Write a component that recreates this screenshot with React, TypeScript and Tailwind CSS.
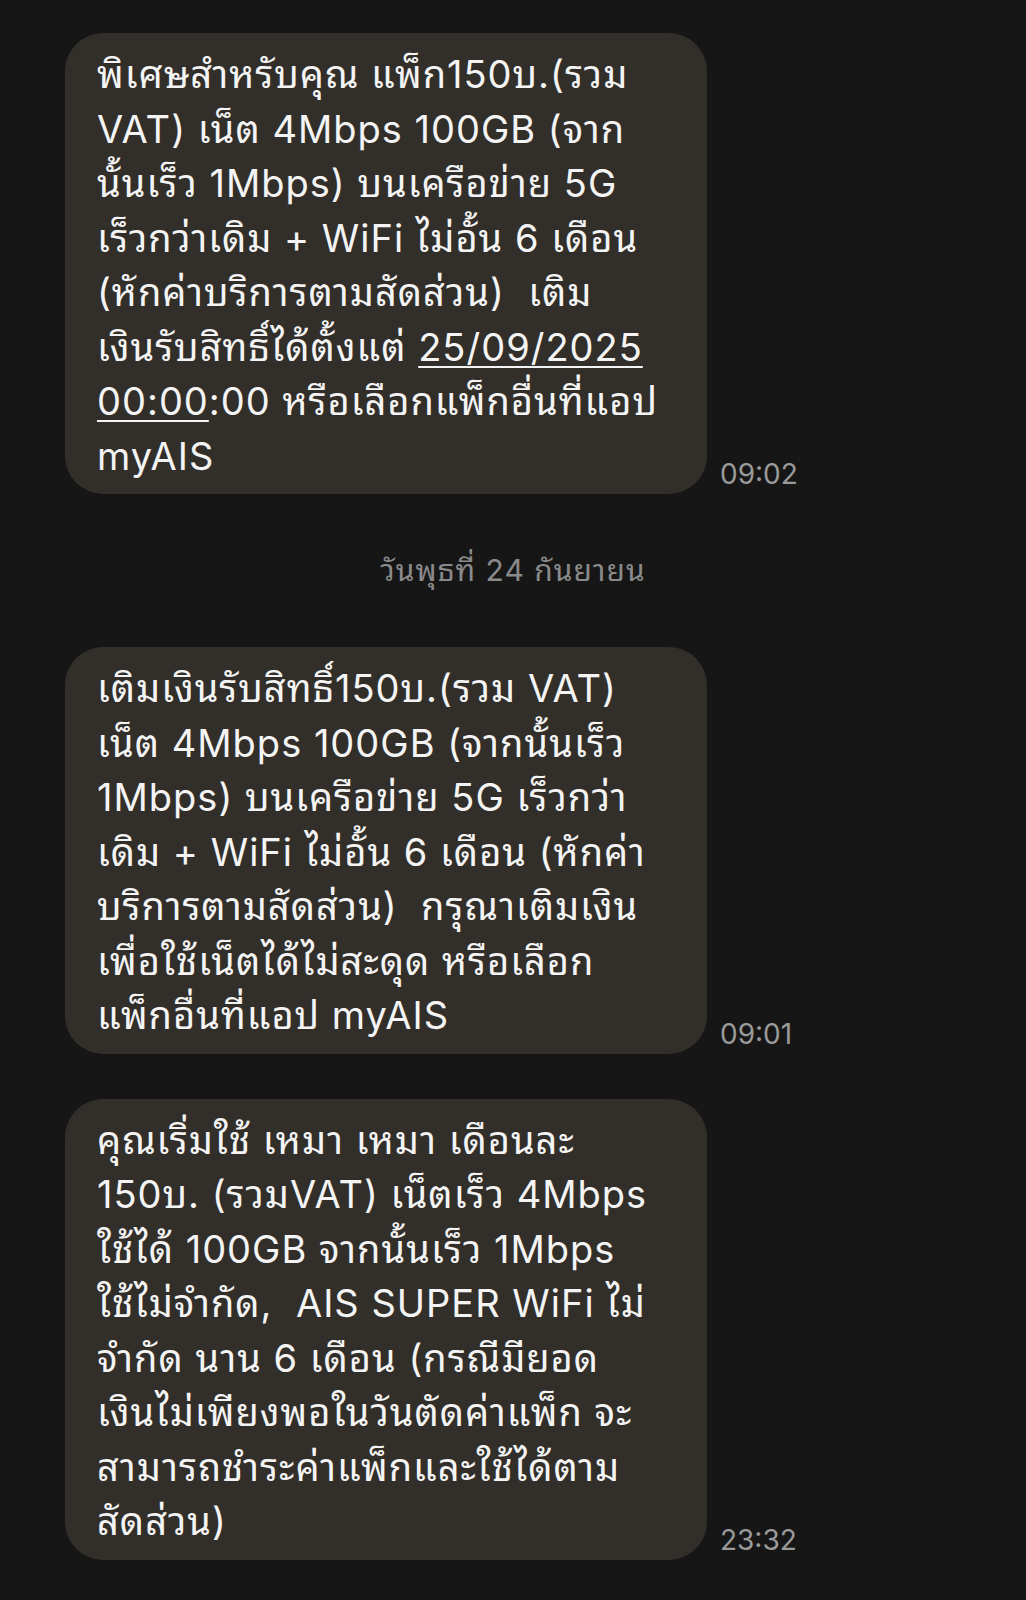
import React from "react";

type Line = React.ReactNode;

function Bubble({ lines, time }: { lines: Line[]; time: string }) {
  return (
    <div className="flex items-end">
      <div className="ml-[65px] w-[642px] rounded-[38px] bg-[#322f2a] pl-[32px] pr-[12px] pt-[14px] pb-[11px] text-[38px] leading-[54.5px] tracking-[1px] text-[#f4f4f4]">
        {lines.map((l, i) => (
          <div key={i} className="whitespace-pre">
            {l}
          </div>
        ))}
      </div>
      <div className="ml-[13px] mb-[4px] text-[28px] leading-[32px] text-[#9a9a9a]">{time}</div>
    </div>
  );
}

export default function App() {
  const b1: Line[] = [
    "พิเศษสำหรับคุณ แพ็ก150บ.(รวม",
    "VAT) เน็ต 4Mbps 100GB (จาก",
    "นั้นเร็ว 1Mbps) บนเครือข่าย 5G",
    "เร็วกว่าเดิม + WiFi ไม่อั้น 6 เดือน",
    "(หักค่าบริการตามสัดส่วน)  เติม",
    <>
      เงินรับสิทธิ์ได้ตั้งแต่ <span className="underline decoration-[2px] underline-offset-[5px]">25/09/2025</span>
    </>,
    <>
      <span className="underline decoration-[2px] underline-offset-[5px]">00:00</span>:00 หรือเลือกแพ็กอื่นที่แอป
    </>,
    "myAIS",
  ];
  const b2: Line[] = [
    "เติมเงินรับสิทธิ์150บ.(รวม VAT)",
    "เน็ต 4Mbps 100GB (จากนั้นเร็ว",
    "1Mbps) บนเครือข่าย 5G เร็วกว่า",
    "เดิม + WiFi ไม่อั้น 6 เดือน (หักค่า",
    "บริการตามสัดส่วน)  กรุณาเติมเงิน",
    "เพื่อใช้เน็ตได้ไม่สะดุด หรือเลือก",
    "แพ็กอื่นที่แอป myAIS",
  ];
  const b3: Line[] = [
    "คุณเริ่มใช้ เหมา เหมา เดือนละ",
    "150บ. (รวมVAT) เน็ตเร็ว 4Mbps",
    "ใช้ได้ 100GB จากนั้นเร็ว 1Mbps",
    "ใช้ไม่จำกัด,  AIS SUPER WiFi ไม่",
    "จำกัด นาน 6 เดือน (กรณีมียอด",
    "เงินไม่เพียงพอในวันตัดค่าแพ็ก จะ",
    "สามารถชำระค่าแพ็กและใช้ได้ตาม",
    "สัดส่วน)",
  ];
  return (
    <div className="min-h-[1600px] w-full bg-[#161616] pt-[33px] font-['Inter','Noto_Sans_Thai_Looped','Noto_Sans',sans-serif]">
      <Bubble lines={b1} time="09:02" />
      <div className="mt-[61px] mb-[62px] text-center text-[30px] leading-[30px] tracking-[1px] text-[#8a8a8a]">
        วันพุธที่ 24 กันยายน
      </div>
      <Bubble lines={b2} time="09:01" />
      <div className="h-[45px]" />
      <Bubble lines={b3} time="23:32" />
    </div>
  );
}
